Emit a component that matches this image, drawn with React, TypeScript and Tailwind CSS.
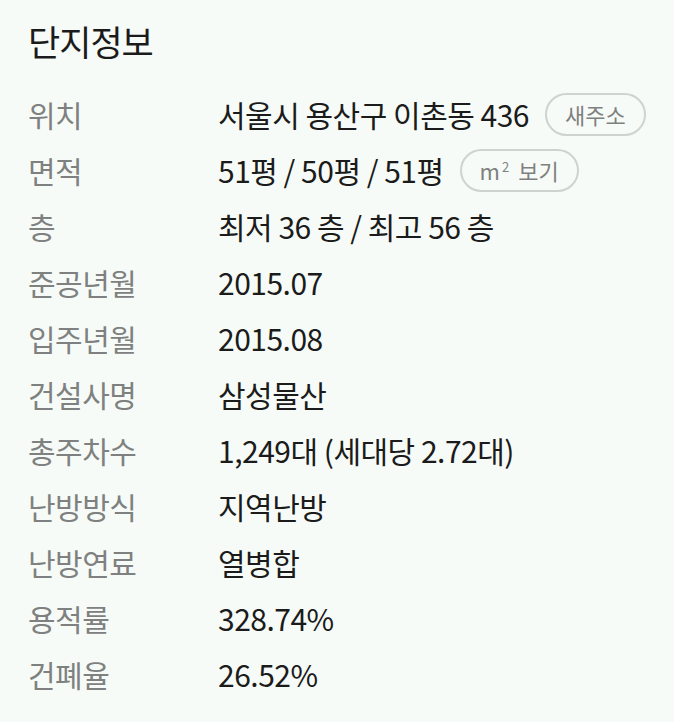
import React from "react";

const rows: { label: string; value: string; pill?: React.ReactNode }[] = [
  { label: "위치", value: "서울시 용산구 이촌동 436", pill: "새주소" },
  {
    label: "면적",
    value: "51평 / 50평 / 51평",
    pill: (
      <>
        m<sup className="text-[13px] relative -top-[3px] ml-[2px]">2</sup>
        <span className="ml-[9px]">보기</span>
      </>
    ),
  },
  { label: "층", value: "최저 36 층 / 최고 56 층" },
  { label: "준공년월", value: "2015.07" },
  { label: "입주년월", value: "2015.08" },
  { label: "건설사명", value: "삼성물산" },
  { label: "총주차수", value: "1,249대 (세대당 2.72대)" },
  { label: "난방방식", value: "지역난방" },
  { label: "난방연료", value: "열병합" },
  { label: "용적률", value: "328.74%" },
  { label: "건폐율", value: "26.52%" },
];

export default function App() {
  return (
    <div
      className="w-[674px] h-[722px] bg-[#f7fbf7] pl-[28px] pt-[20px] overflow-hidden"
      style={{ fontFamily: '"Noto Sans CJK KR", "Noto Sans", sans-serif' }}
    >
      <h1 className="text-[35px] leading-[42px] text-[#1b1b1b] font-normal tracking-[-1px]">
        단지정보
      </h1>
      <div className="mt-[24px] flex flex-col">
        {rows.map((r) => (
          <div key={r.label} className="flex items-center h-[56px]">
            <div className="w-[190px] text-[30px] text-[#7e817f] tracking-[-0.5px]">
              {r.label}
            </div>
            <div className="text-[30px] text-[#1b1b1b] tracking-[-0.5px]">{r.value}</div>
            {r.pill && (
              <div className="ml-[16px] h-[43px] px-[18px] rounded-full border-2 border-[#cfd3cf] flex items-center text-[22px] text-[#7e817f]">
                {r.pill}
              </div>
            )}
          </div>
        ))}
      </div>
    </div>
  );
}
